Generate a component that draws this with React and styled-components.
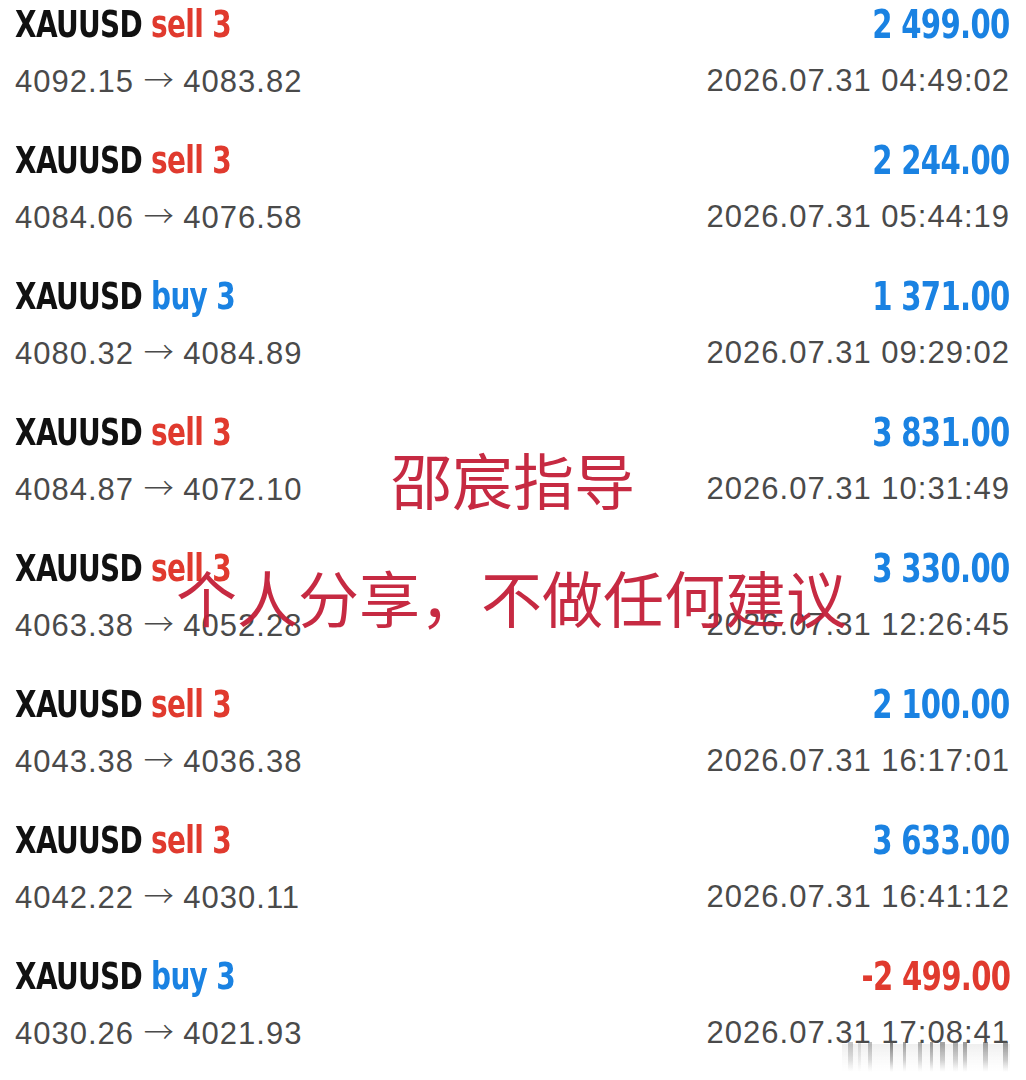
import React from 'react';
import styled, { createGlobalStyle } from 'styled-components';

const GlobalStyle = createGlobalStyle`
  body {
    margin: 0;
    background: #fff;
  }
`;

const Page = styled.div`
  position: relative;
  width: 1026px;
  height: 1080px;
  overflow: hidden;
  background: #fff;
  padding: 0 16px 0 15px;
  box-sizing: border-box;
`;

const Row = styled.div`
  height: 136px;
  display: flex;
  flex-direction: column;
`;

const Line = styled.div`
  display: flex;
  justify-content: space-between;
  align-items: center;
  height: ${(p) => p.h}px;
`;

const Title = styled.div`
  font-family: 'DejaVu Sans', sans-serif;
  font-stretch: condensed;
  font-weight: 700;
  font-size: 37px;
  color: #111;
  letter-spacing: -0.8px;
  transform: scaleX(0.84);
  transform-origin: left center;
  white-space: nowrap;
`;

const Side = styled.span`
  color: ${(p) => (p.buy ? '#1a82e2' : '#e03a2e')};
`;

const Amount = styled.div`
  font-family: 'DejaVu Sans', sans-serif;
  font-stretch: condensed;
  font-weight: 700;
  font-size: 39px;
  letter-spacing: -0.8px;
  color: ${(p) => (p.neg ? '#e03a2e' : '#1a82e2')};
  transform: scaleX(0.83);
  transform-origin: right center;
  white-space: nowrap;
`;

const Sub = styled.div`
  font-family: 'Liberation Sans', Arial, sans-serif;
  font-size: 31px;
  line-height: 1;
  color: #4a4a4a;
  letter-spacing: 1px;
  white-space: nowrap;
`;

const Arrow = styled.span`
  font-family: 'Noto Sans CJK SC', sans-serif;
  font-weight: 300;
  font-size: 30px;
  line-height: 1;
  letter-spacing: 0;
  vertical-align: 1px;
`;

const Stamp = styled.div`
  position: absolute;
  left: ${(p) => p.x}px;
  top: ${(p) => p.y}px;
  font-family: 'Noto Sans CJK SC', sans-serif;
  font-weight: 400;
  font-size: 61px;
  line-height: 1;
  color: #c41f38;
  opacity: 0.95;
  white-space: nowrap;
`;

// stretched streaks under the last timestamp (image artefact)
const Smear = styled.svg`
  position: absolute;
  left: 832px;
  top: 1042px;
  filter: blur(0.5px);
`;

const streaks = [
  [848, 5, 0.35], [858, 3, 0.2], [868, 4, 0.4], [890, 3, 0.75],
  [903, 3, 0.55], [918, 4, 0.45], [930, 3, 0.6], [940, 5, 0.55],
  [953, 5, 0.5], [963, 4, 0.6], [983, 5, 0.55], [1003, 5, 0.6],
];

const trades = [
  ['sell', '4092.15', '4083.82', '2 499.00', '04:49:02'],
  ['sell', '4084.06', '4076.58', '2 244.00', '05:44:19'],
  ['buy', '4080.32', '4084.89', '1 371.00', '09:29:02'],
  ['sell', '4084.87', '4072.10', '3 831.00', '10:31:49'],
  ['sell', '4063.38', '4052.28', '3 330.00', '12:26:45'],
  ['sell', '4043.38', '4036.38', '2 100.00', '16:17:01'],
  ['sell', '4042.22', '4030.11', '3 633.00', '16:41:12'],
  ['buy', '4030.26', '4021.93', '-2 499.00', '17:08:41'],
];

const App = () => (
  <Page>
    <GlobalStyle />
    {trades.map(([side, from, to, amount, time], i) => (
      <Row key={i}>
        <Line h={48}>
          <Title>
            XAUUSD <Side buy={side === 'buy'}>{side} 3</Side>
          </Title>
          <Amount neg={amount.startsWith('-')}>{amount}</Amount>
        </Line>
        <Line h={64}>
          <Sub>
            {from} <Arrow>→</Arrow> {to}
          </Sub>
          <Sub>2026.07.31 {time}</Sub>
        </Line>
      </Row>
    ))}
    <Smear width="182" height="32" viewBox="832 1042 182 32" aria-hidden="true">
      <defs>
        <linearGradient id="fade" x1="0" y1="0" x2="0" y2="1">
          <stop offset="0" stopColor="#555" stopOpacity="1" />
          <stop offset="0.6" stopColor="#777" stopOpacity="0.6" />
          <stop offset="1" stopColor="#999" stopOpacity="0" />
        </linearGradient>
        <linearGradient id="band" x1="0" y1="0" x2="0" y2="1">
          <stop offset="0" stopColor="#e8e8e8" stopOpacity="0.7" />
          <stop offset="1" stopColor="#f4f4f4" stopOpacity="0" />
        </linearGradient>
      </defs>
      <rect x="842" y="1044" width="168" height="28" fill="url(#band)" />
      {streaks.map(([x, w, o]) => (
        <rect key={x} x={x} y="1042" width={w} height="30" fill="url(#fade)" opacity={o} />
      ))}
    </Smear>
    <Stamp x={391} y={448}>邵宸指导</Stamp>
    <Stamp x={176} y={566}>个人分享，不做任何建议</Stamp>
  </Page>
);

export default App;
